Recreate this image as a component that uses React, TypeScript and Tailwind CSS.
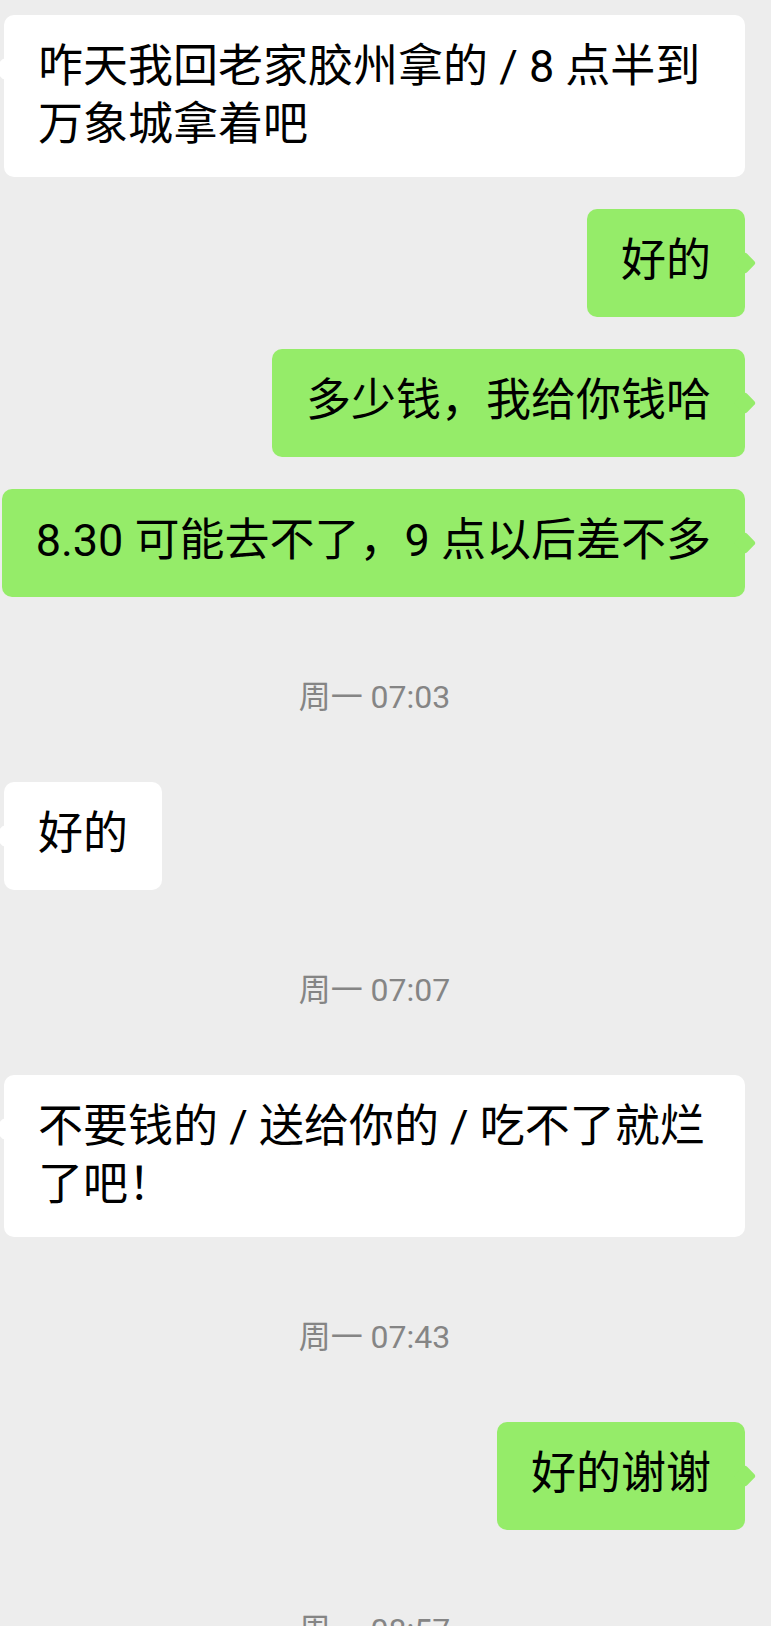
const messages = [
  { id: 1, type: 'in', text: '咋天我回老家胶州拿的 / 8 点半到万象城拿着吧' },
  { id: 2, type: 'out', text: '好的' },
  { id: 3, type: 'out', text: '多少钱，我给你钱哈' },
  { id: 4, type: 'out', text: '8.30 可能去不了，9 点以后差不多' },
  { id: 5, type: 'time', text: '周一 07:03' },
  { id: 6, type: 'in', text: '好的' },
  { id: 7, type: 'time', text: '周一 07:07' },
  { id: 8, type: 'in', text: '不要钱的 / 送给你的 / 吃不了就烂了吧！' },
  { id: 9, type: 'time', text: '周一 07:43' },
  { id: 10, type: 'out', text: '好的谢谢' },
  { id: 11, type: 'time', text: '周一 08:57' }
];

function Bubble({ text, mine }: { text: string; mine: boolean }) {
  return (
    <div
      className={`relative min-h-[108px] rounded-[10px] px-[34px] py-[23px] text-[45px] leading-[58px] text-black ${
        mine ? 'self-end mr-[26px] max-w-[746px] bg-[#95ec69]' : 'self-start ml-[4px] max-w-[741px] bg-white'
      }`}
    >
      <span
        className={`absolute top-[46px] h-4 w-4 rotate-45 rounded-[3px] ${
          mine ? '-right-2 bg-[#95ec69]' : '-left-2 bg-white'
        }`}
      />
      <p className="relative">{text}</p>
    </div>
  );
}

export default function App() {
  return (
    <div className="min-h-screen w-full overflow-hidden bg-[#ededed] font-[Roboto,'Noto_Sans_CJK_SC',sans-serif]">
      <div className="flex flex-col gap-8 pt-[15px]">
        {messages.map((m) =>
          m.type === 'time' ? (
            <div
              key={m.id}
              className="pt-12 pr-[22px] pb-[33px] text-center text-[32px] leading-[40px] text-[#858585]"
            >
              {m.text}
            </div>
          ) : (
            <Bubble key={m.id} text={m.text} mine={m.type === 'out'} />
          )
        )}
      </div>
    </div>
  );
}
